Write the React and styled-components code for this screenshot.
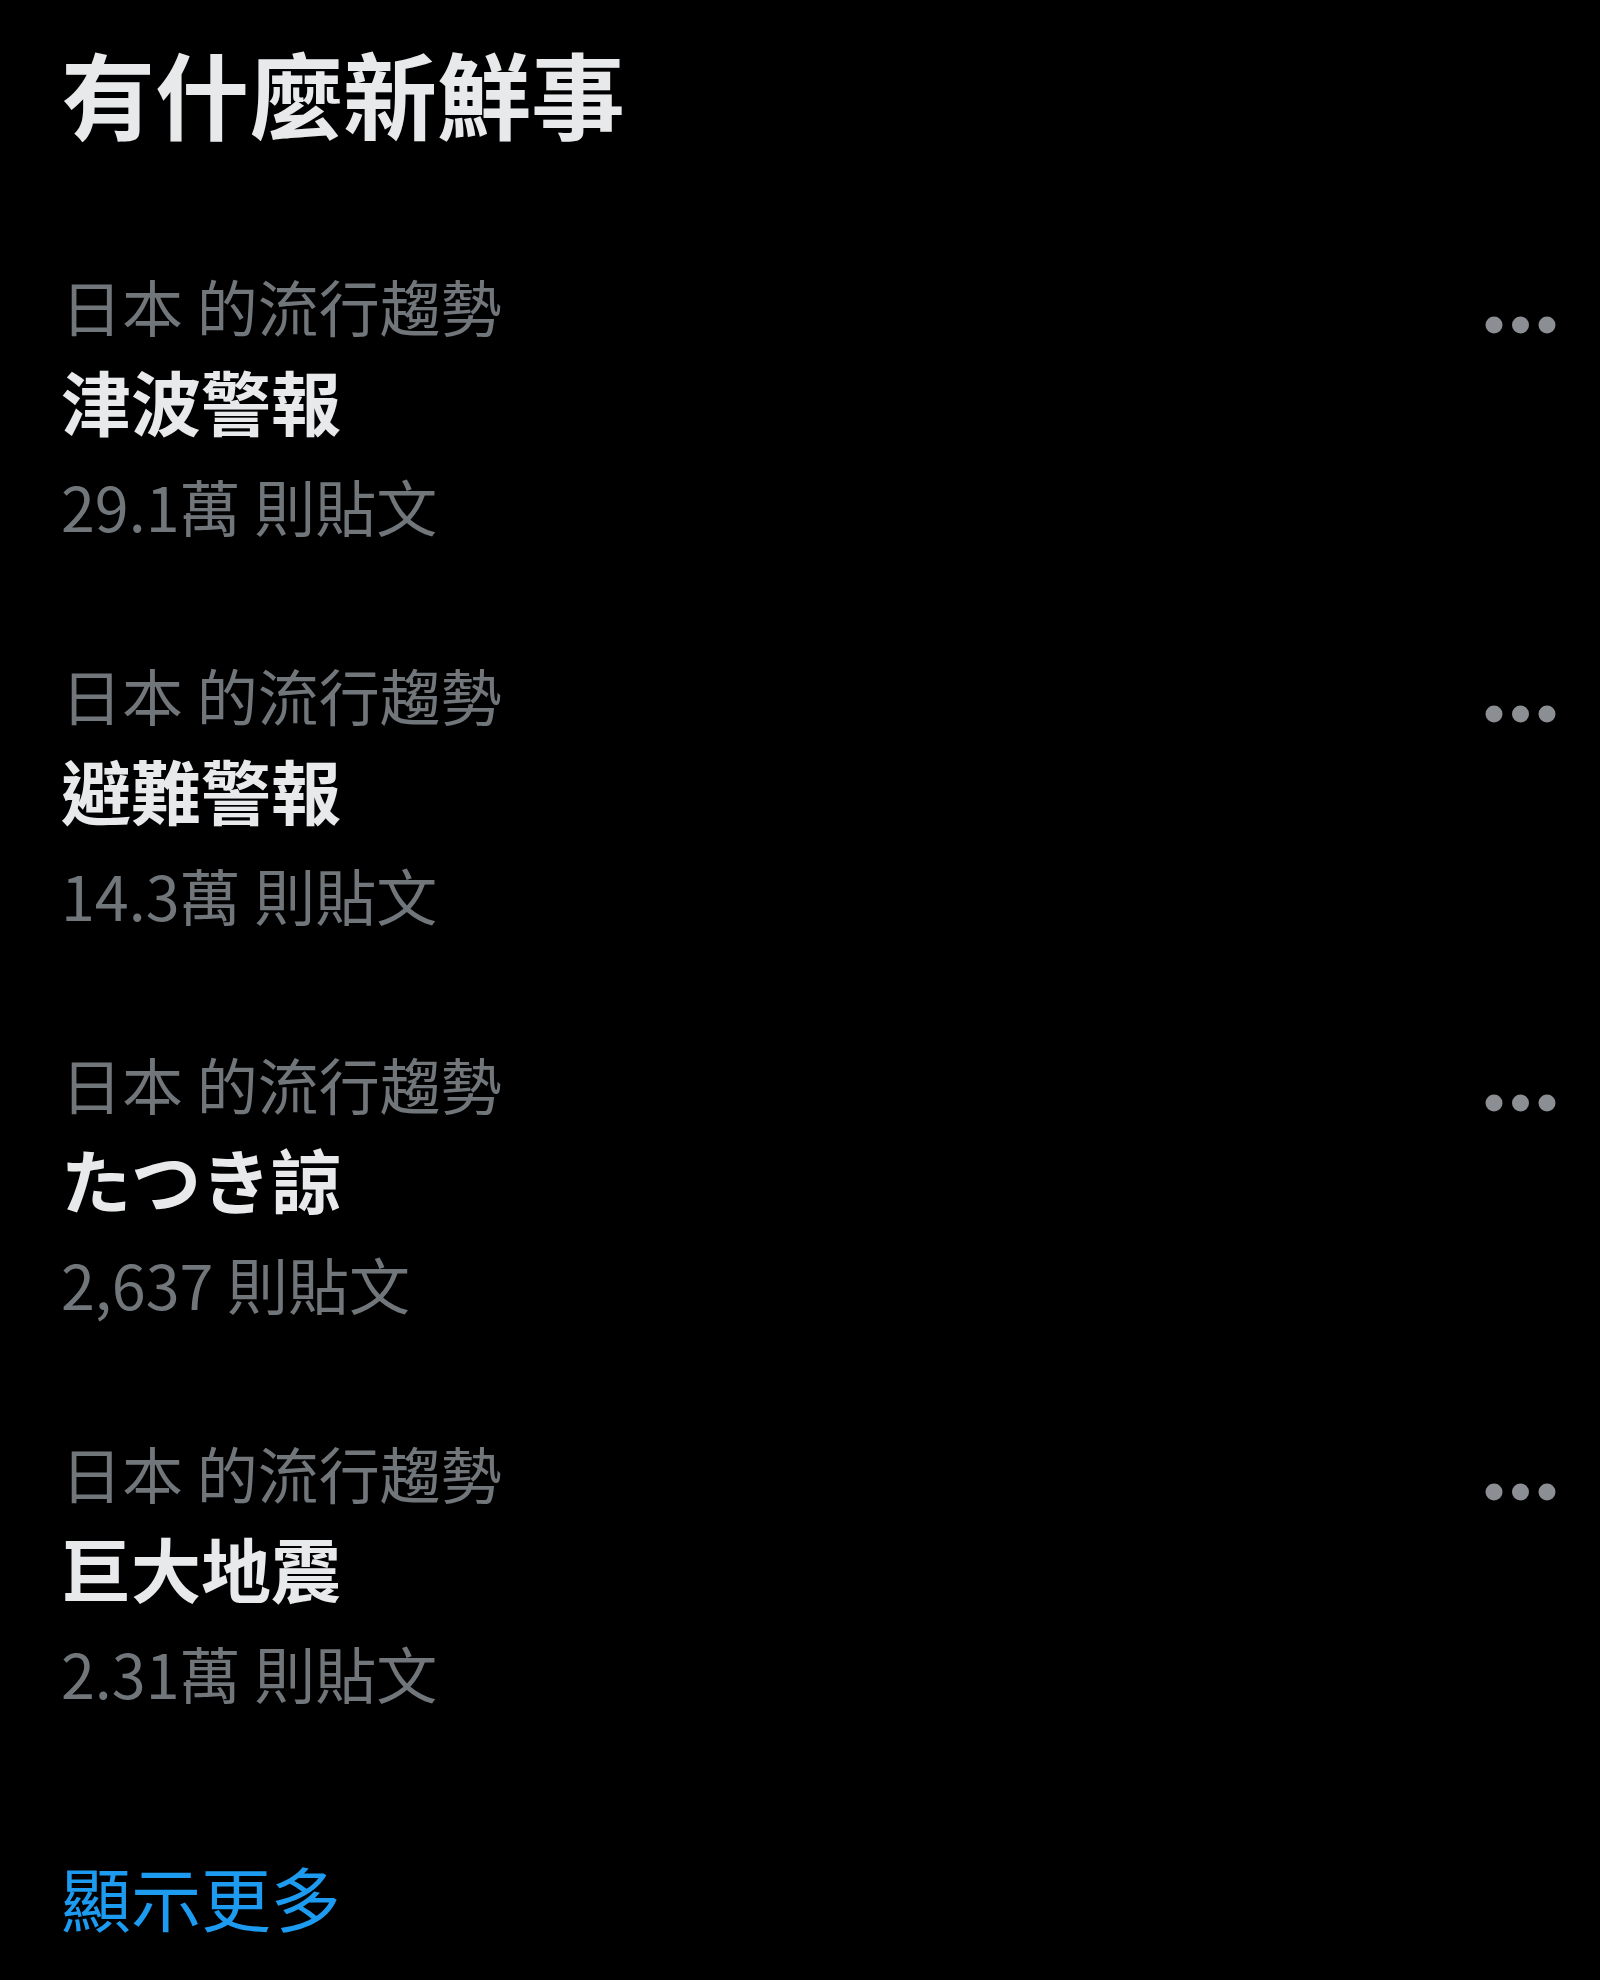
import React from "react";
import styled, { createGlobalStyle } from "styled-components";

const COLORS = {
  bg: "#000000",
  primary: "#e7e9ea",
  secondary: "#71767b",
  link: "#1d9bf0",
};

const trends = [
  { context: "日本 的流行趨勢", name: "津波警報", count: "29.1萬 則貼文" },
  { context: "日本 的流行趨勢", name: "避難警報", count: "14.3萬 則貼文" },
  { context: "日本 的流行趨勢", name: "たつき諒", count: "2,637 則貼文" },
  { context: "日本 的流行趨勢", name: "巨大地震", count: "2.31萬 則貼文" },
];

function MoreIcon() {
  return (
    <svg width="72" height="20" viewBox="0 0 72 20" fill="currentColor">
      <circle cx="10" cy="10" r="8.5" />
      <circle cx="36.5" cy="10" r="8.5" />
      <circle cx="63" cy="10" r="8.5" />
    </svg>
  );
}

function Trend({ context, name, count }) {
  return (
    <Item>
      <Texts>
        <Context>{context}</Context>
        <Name>{name}</Name>
        <Count>{count}</Count>
      </Texts>
      <More>
        <MoreIcon />
      </More>
    </Item>
  );
}

export default function App() {
  return (
    <>
      <GlobalStyle />
      <Panel>
        <Title>有什麼新鮮事</Title>
        {trends.map((t) => (
          <Trend key={t.name} {...t} />
        ))}
        <ShowMore>顯示更多</ShowMore>
      </Panel>
    </>
  );
}

const GlobalStyle = createGlobalStyle`
  html, body {
    margin: 0;
    padding: 0;
    background: ${COLORS.bg};
  }
  body {
    font-family: "Noto Sans CJK TC", "Noto Sans", sans-serif;
  }
`;

const Panel = styled.section`
  width: 1600px;
  height: 1980px;
  box-sizing: border-box;
  padding: 0 44px 0 61px;
  background: ${COLORS.bg};
  display: flex;
  flex-direction: column;
  overflow: hidden;
`;

const Title = styled.h2`
  margin: 0 0 36px;
  height: 184px;
  line-height: 184px;
  font-size: 94px;
  font-weight: 700;
  color: ${COLORS.primary};
`;

const Item = styled.div`
  height: 389px;
  box-sizing: border-box;
  padding-top: 41px;
  display: flex;
  justify-content: space-between;
  align-items: flex-start;
`;

const Texts = styled.div`
  display: flex;
  flex-direction: column;
`;

const Context = styled.div`
  font-size: 61px;
  line-height: 90px;
  color: ${COLORS.secondary};
`;

const Name = styled.div`
  font-size: 70px;
  line-height: 100px;
  font-weight: 700;
  color: ${COLORS.primary};
`;

const Count = styled.div`
  font-size: 61px;
  line-height: 110px;
  color: ${COLORS.secondary};
`;

const More = styled.div`
  margin-top: 54px;
  color: #8b8f93;
  display: flex;
`;

const ShowMore = styled.div`
  padding-top: 56px;
  line-height: 130px;
  font-size: 70px;
  color: ${COLORS.link};
`;
